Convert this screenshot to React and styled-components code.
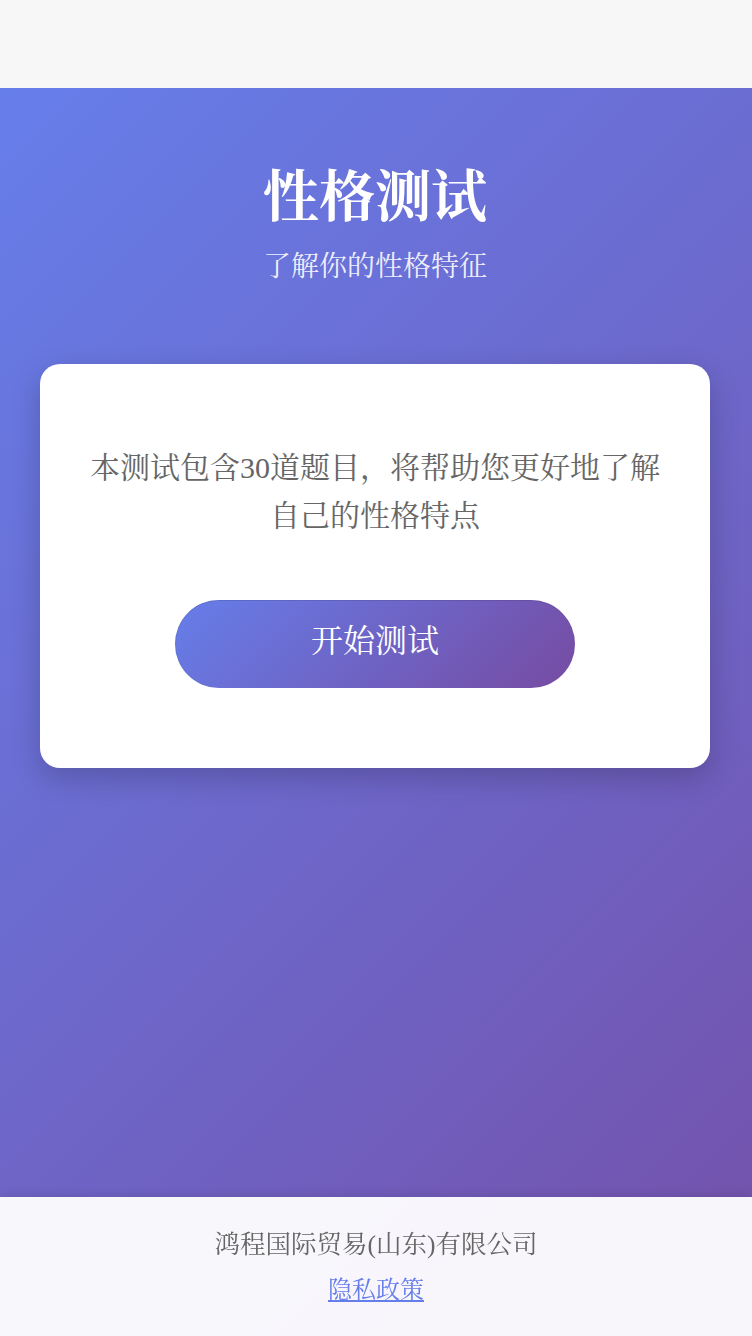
import React from "react";
import styled, { createGlobalStyle } from "styled-components";

const Global = createGlobalStyle`
  html, body { margin: 0; padding: 0; }
  body {
    background: #f7f7f7;
    font-family: "Liberation Serif", "Noto Serif CJK SC", "Source Han Serif SC", "AR PL UMing CN", "AR PL SungtiL GB", serif;
  }
  * { box-sizing: border-box; }
`;

const Page = styled.div`
  display: flex;
  flex-direction: column;
  padding-top: 88px;
`;

const Hero = styled.main`
  min-height: 1502px;
  background: linear-gradient(135deg, #667eea 0%, #764ba2 100%);
  padding: 76px 42px 200px 40px;
  display: flex;
  flex-direction: column;
  align-items: center;
`;

const Title = styled.h1`
  margin: 0;
  font-size: 56px;
  line-height: 67px;
  font-weight: bold;
  color: #fff;
`;

const Subtitle = styled.p`
  margin: 19px 0 0;
  font-size: 28px;
  line-height: 34px;
  color: rgba(255, 255, 255, 0.9);
`;

const Card = styled.section`
  align-self: stretch;
  margin-top: 80px;
  background: #fff;
  border-radius: 20px;
  padding: 80px 40px;
  box-shadow: 0 10px 30px rgba(0, 0, 0, 0.2);
  display: flex;
  flex-direction: column;
  align-items: center;
`;

const Intro = styled.p`
  margin: 0;
  font-size: 30px;
  line-height: 48px;
  color: #666;
  text-align: center;
`;

const StartButton = styled.button`
  margin-top: 60px;
  width: 400px;
  height: 88px;
  padding: 0 0 6px;
  border: none;
  border-radius: 44px;
  background: linear-gradient(135deg, #667eea 0%, #764ba2 100%);
  color: #fff;
  font-family: inherit;
  font-size: 32px;
  line-height: 40px;
  cursor: pointer;
  box-shadow: inset 0 1px 0 rgba(0, 0, 0, 0.1), inset 1px 0 0 rgba(0, 0, 0, 0.06);
`;

const Footer = styled.footer`
  position: fixed;
  left: 0;
  right: 0;
  bottom: 0;
  height: 139px;
  background: rgba(255, 255, 255, 0.95);
  box-shadow: 0 -2px 10px rgba(0, 0, 0, 0.1);
  display: flex;
  flex-direction: column;
  align-items: center;
  justify-content: center;
  gap: 8px;
`;

const Company = styled.p`
  margin: 0;
  font-size: 25.5px;
  line-height: 38px;
  color: #666;
`;

const PolicyLink = styled.a`
  font-size: 24px;
  line-height: 36px;
  color: #667eea;
  text-decoration: underline;
`;

export default function App() {
  return (
    <div lang="zh-CN">
      <Global />
      <Page>
        <Hero>
          <Title>性格测试</Title>
          <Subtitle>了解你的性格特征</Subtitle>
          <Card>
            <Intro>本测试包含30道题目，将帮助您更好地了解自己的性格特点</Intro>
            <StartButton type="button">开始测试</StartButton>
          </Card>
        </Hero>
      </Page>
      <Footer>
        <Company>鸿程国际贸易(山东)有限公司</Company>
        <PolicyLink href="#">隐私政策</PolicyLink>
      </Footer>
    </div>
  );
}
